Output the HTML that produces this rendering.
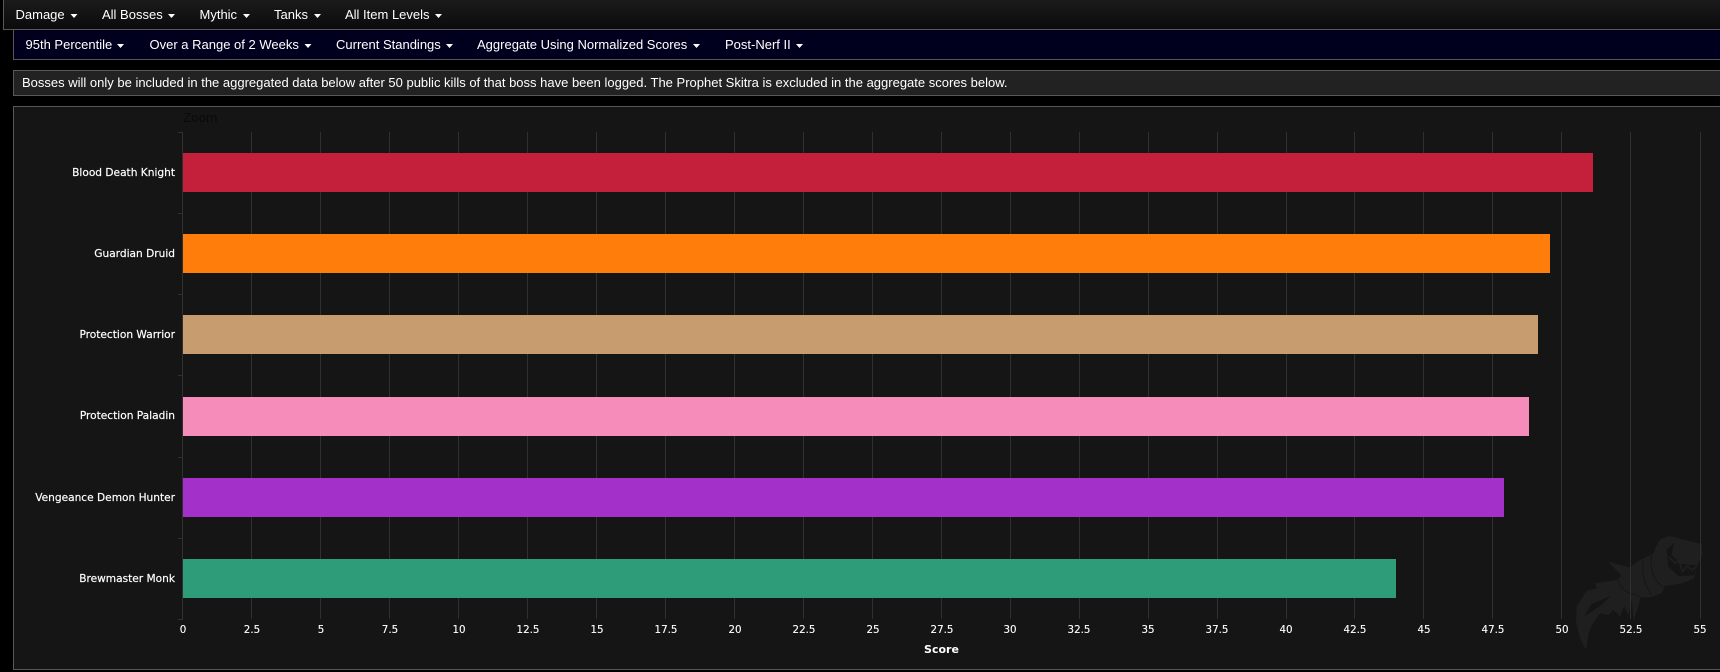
<!DOCTYPE html>
<html><head><meta charset="utf-8"><title>Aggregate Scores</title>
<style>
html,body{margin:0;padding:0;background:#000;width:1720px;height:672px;overflow:hidden}
svg{display:block}
.n{font:13px "Liberation Sans",Arial,sans-serif;fill:#fff}
.l{font:10.6px "DejaVu Sans",sans-serif;fill:#fff;text-anchor:end;stroke:#fff;stroke-width:.18px}
.x{font:10.3px "DejaVu Sans",sans-serif;fill:#fff;text-anchor:middle;stroke:#fff;stroke-width:.12px}
</style></head><body>
<svg width="1720" height="672" viewBox="0 0 1720 672" xmlns="http://www.w3.org/2000/svg">
<defs><linearGradient id="g" x1="0" y1="0" x2="0" y2="1"><stop offset="0" stop-color="#1b1b1b"/><stop offset="1" stop-color="#0b0b0b"/></linearGradient></defs>
<rect width="1720" height="672" fill="#000"/>
<rect x="3" y="0" width="1717" height="29" fill="url(#g)"/>
<rect x="3" y="29" width="1717" height="1" fill="#585858"/>
<rect x="3" y="0" width="1" height="30" fill="#585858"/>
<rect x="13" y="30" width="1707" height="29" fill="#00001e"/>
<rect x="13" y="59" width="1707" height="1" fill="#585858"/>
<rect x="13" y="30" width="1" height="30" fill="#585858"/>
<rect x="13" y="70" width="1707" height="25" fill="#222"/>
<rect x="13" y="70" width="1707" height="1" fill="#585858"/>
<rect x="13" y="95" width="1707" height="1" fill="#585858"/>
<rect x="13" y="70" width="1" height="26" fill="#585858"/>
<rect x="13" y="106" width="1707" height="563" fill="#151515"/>
<rect x="13" y="106" width="1707" height="1" fill="#585858"/>
<rect x="13" y="669" width="1707" height="1" fill="#585858"/>
<rect x="13" y="106" width="1" height="564" fill="#585858"/>

<text class="n" x="15.500" y="19">Damage</text><polygon points="70.500,14 77.500,14 74,18" fill="#fff"/>
<text class="n" x="102" y="19">All Bosses</text><polygon points="168,14 175,14 171.500,18" fill="#fff"/>
<text class="n" x="199.500" y="19">Mythic</text><polygon points="243,14 250,14 246.500,18" fill="#fff"/>
<text class="n" x="274" y="19">Tanks</text><polygon points="314,14 321,14 317.500,18" fill="#fff"/>
<text class="n" x="345" y="19">All Item Levels</text><polygon points="435,14 442,14 438.500,18" fill="#fff"/>
<text class="n" x="25.500" y="49">95th Percentile</text><polygon points="117,44 124,44 120.500,48" fill="#fff"/>
<text class="n" x="149.500" y="49">Over a Range of 2 Weeks</text><polygon points="304.500,44 311.500,44 308,48" fill="#fff"/>
<text class="n" x="336" y="49">Current Standings</text><polygon points="446,44 453,44 449.500,48" fill="#fff"/>
<text class="n" x="477" y="49">Aggregate Using Normalized Scores</text><polygon points="693,44 700,44 696.500,48" fill="#fff"/>
<text class="n" x="725" y="49">Post-Nerf II</text><polygon points="796,44 803,44 799.500,48" fill="#fff"/>
<text class="n" x="22" y="87">Bosses will only be included in the aggregated data below after 50 public kills of that boss have been logged. The Prophet Skitra is excluded in the aggregate scores below.</text>

<text x="183" y="122" style="font:12px 'DejaVu Sans',sans-serif;fill:#0a0a0a">Zoom</text>

<!-- mascot -->
<g transform="translate(1400,500) scale(.33333)">
<path fill="#1f1f1f" d="M625 185 L690 203 L715 183 L760 160 L768 140 L780 118 L808 108 L905 132 L908 160 L890 205 L882 236 L845 250 L795 258 L785 280 L750 292 L722 292 L715 320 L700 362 L696 300 L685 345 L672 318 L660 350 L640 330 L625 345 L600 340 L575 375 L565 405 L558 450 L540 415 L528 365 L530 318 L560 272 L590 265 L585 250 L650 240 L665 228 Z"/>
<path fill="#151515" d="M800 150 L822 128 L815 165 L842 192 L892 196 L882 226 L835 228 L805 200 Z"/>
<path fill="#151515" d="M552 350 L575 312 L632 288 L605 314 L570 338 Z"/>
<path fill="none" stroke="#1f1f1f" stroke-width="5" d="M806 170 L825 190 L835 182 L848 215 L862 198 L875 210 L890 200"/>
<path fill="none" stroke="#171717" stroke-width="3" d="M730 180 Q722 240 755 285 M755 165 Q745 230 790 262 M655 240 Q660 270 700 285 M700 280 L722 292"/>
</g>

<!-- grid -->
<g fill="#303030">
<rect x="251" y="132" width="1" height="487"/><rect x="320" y="132" width="1" height="487"/><rect x="389" y="132" width="1" height="487"/><rect x="458" y="132" width="1" height="487"/><rect x="527" y="132" width="1" height="487"/><rect x="596" y="132" width="1" height="487"/><rect x="665" y="132" width="1" height="487"/><rect x="734" y="132" width="1" height="487"/><rect x="803" y="132" width="1" height="487"/><rect x="872" y="132" width="1" height="487"/><rect x="941" y="132" width="1" height="487"/><rect x="1010" y="132" width="1" height="487"/><rect x="1079" y="132" width="1" height="487"/><rect x="1148" y="132" width="1" height="487"/><rect x="1217" y="132" width="1" height="487"/><rect x="1286" y="132" width="1" height="487"/><rect x="1354" y="132" width="1" height="487"/><rect x="1423" y="132" width="1" height="487"/><rect x="1492" y="132" width="1" height="487"/><rect x="1561" y="132" width="1" height="487"/><rect x="1630" y="132" width="1" height="487"/><rect x="1700" y="132" width="1" height="487"/>
<rect x="182" y="132" width="1" height="488"/>
<rect x="178" y="132" width="4" height="1"/><rect x="178" y="213" width="4" height="1"/><rect x="178" y="294" width="4" height="1"/><rect x="178" y="375" width="4" height="1"/><rect x="178" y="457" width="4" height="1"/><rect x="178" y="538" width="4" height="1"/><rect x="178" y="619" width="4" height="1"/>
</g>

<!-- bars -->
<rect x="183" y="153" width="1410" height="39" fill="#c41f3b"/>
<rect x="183" y="234" width="1367" height="39" fill="#ff7d0a"/>
<rect x="183" y="315" width="1355" height="39" fill="#c79c6e"/>
<rect x="183" y="397" width="1346" height="39" fill="#f58cba"/>
<rect x="183" y="478" width="1321" height="39" fill="#a330c9"/>
<rect x="183" y="559" width="1213" height="39" fill="#2e9c78"/>

<!-- labels -->
<text class="l" x="175" y="176">Blood Death Knight</text>
<text class="l" x="175" y="257">Guardian Druid</text>
<text class="l" x="175" y="338">Protection Warrior</text>
<text class="l" x="175" y="419">Protection Paladin</text>
<text class="l" x="175" y="501">Vengeance Demon Hunter</text>
<text class="l" x="175" y="582">Brewmaster Monk</text>

<text class="x" x="183" y="633">0</text><text class="x" x="252" y="633">2.5</text><text class="x" x="321" y="633">5</text><text class="x" x="390" y="633">7.5</text><text class="x" x="459" y="633">10</text><text class="x" x="528" y="633">12.5</text><text class="x" x="597" y="633">15</text><text class="x" x="666" y="633">17.5</text><text class="x" x="735" y="633">20</text><text class="x" x="804" y="633">22.5</text><text class="x" x="873" y="633">25</text><text class="x" x="942" y="633">27.5</text><text class="x" x="1010" y="633">30</text><text class="x" x="1079" y="633">32.5</text><text class="x" x="1148" y="633">35</text><text class="x" x="1217" y="633">37.5</text><text class="x" x="1286" y="633">40</text><text class="x" x="1355" y="633">42.5</text><text class="x" x="1424" y="633">45</text><text class="x" x="1493" y="633">47.5</text><text class="x" x="1562" y="633">50</text><text class="x" x="1631" y="633">52.5</text><text class="x" x="1700" y="633">55</text>
<text x="941.5" y="653" text-anchor="middle" style="font:bold 11px 'DejaVu Sans',sans-serif;fill:#fff">Score</text>
</svg>
</body></html>
